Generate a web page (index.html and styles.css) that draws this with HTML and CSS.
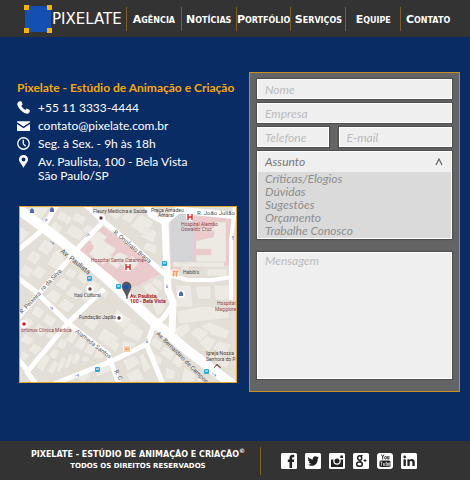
FILE: index.html
```html
<!DOCTYPE html>
<html lang="pt-BR">
<head>
<meta charset="utf-8">
<meta name="viewport" content="width=device-width, initial-scale=1">
<title>Pixelate - Contato</title>
<link rel="stylesheet" href="styles.css">
</head>
<body>
<header class="topbar">
  <a class="brand" href="#">
    <svg class="brand-mark" viewBox="0 0 28 28" aria-hidden="true">
      <rect x="1" y="1" width="26" height="26" fill="#1450b4"/>
      <path d="M0 0h5v5H0zM23 0h5v5h-5zM0 23h5v5H0zM23 23h5v5h-5z" fill="#f8b400"/>
    </svg>
    <span>PIXELATE</span>
  </a>
  <nav class="menu">
    <a href="#">Agência</a>
    <a href="#">Notícias</a>
    <a href="#">Portfólio</a>
    <a href="#">Serviços</a>
    <a href="#">Equipe</a>
    <a href="#">Contato</a>
  </nav>
</header>

<main class="content">
  <section class="info">
    <h1>Pixelate - Estúdio de Animação e Criação</h1>
    <ul class="contacts">
      <li>
        <svg viewBox="0 0 12 12" aria-hidden="true"><path d="M2.4.3 4 .2 5.2 3.2 3.9 4.4Q5.2 7 7.6 8.2L8.9 6.9 11.8 8.4Q12.2 10.6 10 11.7 7.6 12.2 4 8.9.2 5.2.2 2.6.6.8 2.4.3z" fill="#fff"/></svg>
        <span>+55 11 3333-4444</span>
      </li>
      <li>
        <svg viewBox="0 0 12 12" aria-hidden="true"><path d="M0 2h12v1L6 7 0 3zM0 4.5l6 4 6-4V11H0z" fill="#fff"/></svg>
        <span>contato@pixelate.com.br</span>
      </li>
      <li>
        <svg viewBox="0 0 12 12" aria-hidden="true"><circle cx="6" cy="6" r="5.3" fill="none" stroke="#fff" stroke-width="1.2"/><path d="M5.8 2.5v3.8L8 8.6" fill="none" stroke="#fff" stroke-width="1.2"/></svg>
        <span>Seg. à Sex. - 9h às 18h</span>
      </li>
      <li>
        <svg viewBox="0 0 12 12" aria-hidden="true"><path fill-rule="evenodd" d="M6 0a4.2 4.2 0 0 1 4.2 4.2C10.200 6.500 7.500 8.500 6 12 4.500 8.500 1.800 6.500 1.800 4.200A4.200 4.200 0 0 1 6 0zM6 2.400a1.800 1.800 0 1 0 0 3.600 1.800 1.800 0 0 0 0-3.600z" fill="#fff"/></svg>
        <span>Av. Paulista, 100 - Bela Vista<br>São Paulo/SP</span>
      </li>
    </ul>

    <svg class="map" viewBox="20 207 216 175" role="img" aria-label="Mapa: Av. Paulista, 100 - Bela Vista">
      <rect x="20" y="207" width="216" height="175" fill="#e3dfd7"/>
      <g fill="#eacaca">
        <path d="M78 252 102 226 131 247 160 274 137 286 124 289z"/>
        <path d="M170 219 180 211 232 215 232 265 171 270z"/>
      </g>
      <path d="M170 222 179 212 195 214 193 262 171 262z" fill="#d5d5d8"/>
      <g fill="#edeae4" stroke="#dad6cd" stroke-width=".4">
        <path d="M20 226l10 7-10 10zM32 207h18l-12 16-12-9zM61 211l12 7-5 7-12-7zM76 212l11 6-5 7-11-6zM54 221l9 6-5 8-9-6zM72 224l14 8-7 9-14-8zM88 224l8 5-6 8-9-6z"/>
        <path d="M45 239l10 6-8 11-10-7zM33 250l9 6-7 9-9-6zM54 252l7-4 4 14-9 8-9-6zM24 264l10 6-6 8-8-5zM38 265l9 6-7 9-9-6z"/>
        <path d="M70 267l8 5-5 7-9-5zM81 271l9 7-5 7-9-7zM92 279l9 7-6 9-10-7zM62 277l9 5-7 9-9-6zM73 285l10 6-7 9-11-6zM53 289l9 6-7 9-10-7zM65 298l10 7-7 8-11-7zM86 293l8 5-5 6-8-5zM102 286l8 7-5 5-7-6z"/>
        <path d="M36 305l9 6-5 8-9-5zM47 313l10 6-5 8-10-5zM26 316l8 6-5 7-8-5zM38 323l10 6-6 8-9-5zM25 333l9 6-5 7-9-5zM34 343l8 5-6 7-8-5zM50 331l6 4-4 5-7-4zM22 350l8 5-5 6-5-3z"/>
        <path d="M73 329l6 4-7 11-7-4zM82 334l7 5-7 12-8-5zM91 341l7 5-6 10-9-4zM61 338l7 4-5 8-7-4zM54 348l6 3-5 9-7-4zM45 354l6 3-8 15-7-5zM54 360l5 3-6 12-6-4zM62 356l5 3-7 14-4-2zM69 353l5 3-6 13-4-2zM76 352l5 4-5 9-5-2zM84 355l6 3-3 4-6-1zM98 348l8 6-4 5-9-1z"/>
        <path d="M104 328l15 10-9 10-13-9zM90 315l10 7-7 9-10-7zM117 309l15 11-7 10-14-11zM128 321l16 10-5 11-17-8zM112 339l8 5-4 8-8-6zM124 340l13 4-9 5-8-2z"/>
        <path d="M141 214l13 8-9 14-15-10zM126 213l11 1-7 10-9-6zM145 227l12 5-3 11-14-6zM146 242l11 3-1 10-13-6zM113 210l9 4-5 6-9-6zM142 287l8-5 10 11-8 5zM155 278l8 4-1 9-11-8zM140 292l9 7-6 8-9-5zM151 301l10-5 5 12-9 9z"/>
        <path d="M89 239l10-8 8 6-3 4 12 8-5 7 10 8-4 5-10-8-4 4-14-11 5-6zM119 252l9 4-5 10-11-8zM132 256l7 6-6 8-9-6z"/>
        <path d="M197 229l17-1v-6h12v40h-30v-7h15v-6h-15v-8l18-4v-6h-17zM173 262h51v5h-51zM181 263h8v6h-8z"/>
        <path d="M176 285h15l2 22h-17zM195 286h16v13h-13zM214 285h16l-1 15h-14zM176 311l27-5 26 2v10l-50 6zM207 269h20v7h-20z"/>
        <path d="M164 322l10 5-8 11-10-8zM178 326l10-3 3 7-10 8-9-6zM190 333l7-6 13 5-10 10zM200 326l9-4 21 8-4 9-14-4zM199 343l8-8 9 6-7 11zM218 341l13 3-4 10-15-5zM208 354l10-1 12 10-4 5-16-8z"/>
        <path d="M154 337l9 6-4 8-9-7zM165 346l10 7-4 8-12-8zM152 352l10 6-1 8-6-3zM177 354l8 6-5 8-9-6zM166 367l10 4-2 8h-9zM184 367l12 8-2 7h-13zM122 361l12-6 7 8-13 8zM143 353l8 15-7 5-5-17zM126 374l12-6 7 11-15 3zM95 369l14-6 4 7-16 7zM75 377l13-7 3 6-8 6zM199 375l9 7h-11z"/>
      </g>
      <g fill="none" stroke="#fff" stroke-linejoin="round">
        <path d="M57 205 40 232 18 250M102 223 80 246 64 265 42 290 18 318" stroke-width="5"/>
        <path d="M84 204 103 221 131 244 169 278" stroke-width="5"/>
        <path d="M147 205 151 214 165 222 166 250 168 290 173 302 172 332M164 222 178 210 238 216" stroke-width="7"/>
        <path d="M235 207 231 240 231 300M168 275 188 280 212 280 232 277" stroke-width="4"/>
        <path d="M18 278 35 291 68 323 108 354 119 384M104 289 68 323 27 372 36 384M18 359 28 371" stroke-width="5"/>
        <path d="M54 384 112 361 147 344 153 327 164 317 173 304M146 343 163 384" stroke-width="5"/>
        <path d="M17 208 60 240 105 277 128 298 155 323 187 350 233 385" stroke-width="10"/>
      </g>
      <g fill="none" stroke="#8793c8" stroke-width=".7">
        <path d="m50 241 4 3-1-2m1 2h-2M45 222l2-3-2 1m2-1v2M86 237l3-3-2 0m2 0v2M50 307l3 2-1-2m1 2h-2M75 376l4-1-2-1m2 1-1 2M167 284v4l-1-2m1 2 1-2M233 240v-4l-1 2m1-2 1 2M147 339v4l-1-2m1 2 1-2M212 373l4 3-1-2m1 2h-2"/>
      </g>
      <g fill="#fff"><circle cx="101" cy="218" r="4"/><circle cx="128" cy="267" r="4"/><circle cx="190" cy="217" r="4"/><circle cx="90" cy="289" r="4"/><circle cx="119" cy="318" r="4"/><circle cx="24" cy="324" r="4"/><circle cx="175" cy="273" r="4"/><circle cx="127" cy="349" r="4"/><circle cx="181" cy="294" r="4"/></g>
      <g class="map-street">
        <text transform="translate(60 252) rotate(39)" class="map-avenue">Av. Paulista</text>
        <text transform="translate(113 233) rotate(40)">R. Onofrato Braga</text>
        <text transform="translate(43 291) rotate(-46)">ra da Silva</text>
        <text transform="translate(22 314) rotate(-46)">R. Peixeira</text>
        <text transform="translate(75 332) rotate(38)">Alameda Santos</text>
        <text transform="translate(156 334) rotate(45)">Av. Bernardino de Campos</text>
        <text x="197" y="215">R. João Julião</text>
        <text transform="translate(114 371) rotate(62)">R. C</text>
      </g>
      <g class="map-place">
        <text x="93" y="213">Fleury Medicina e Saúde</text>
        <text x="151" y="212">Praça Amadeu</text>
        <text x="158" y="217">Amaral</text>
        <text x="183" y="274">Habib's</text>
        <text x="74" y="297">Itaú Cultural</text>
        <text x="79" y="319">Fundação Japão</text>
        <text x="206" y="355">Igreja Nossa</text>
        <text x="206" y="361">Senhora do P</text>
      </g>
      <g class="map-place map-health">
        <text x="91" y="262">Hospital Santa Catarina</text>
        <text x="181" y="226">Hospital Alemão</text>
        <text x="181" y="231">Oswaldo Cruz</text>
        <text x="21" y="332">orhinus Clínica Médica</text>
        <text x="217" y="305">Hospital</text>
        <text x="215" y="311">Maggiore</text>
      </g>
      <g fill="#673a3a"><circle cx="101" cy="218" r="1.700"/><circle cx="90" cy="289" r="1.700"/><circle cx="119" cy="318" r="1.700"/></g>
      <circle cx="24" cy="324" r="1.800" fill="#d92020"/>
      <path d="M126 264v6m4-6v6m-4-3h4M188 214v6m4-6v6m-4-3h4" fill="none" stroke="#e1242c" stroke-width="1.400"/>
      <path d="M173 271h5v1h-5zm0 2h1v3h-1zm3 0h1v3h-1zM125 346v3h4v-3m-2 0v6m-2-3v3m4-3v3" fill="none" stroke="#f07b20" stroke-width=".8"/>
      <g fill="#5268b8"><path d="M30 213v-3l2-2 2 2v3zM50 212v-3l2-2 2 2v3zM179 296v-3l2-2 2 2v3z"/></g>
      <g fill="#26a9e1"><rect x="87" y="276" width="5" height="5" rx="1"/><rect x="116" y="284" width="5" height="5" rx="1"/><rect x="162" y="261" width="5" height="5" rx="1"/><rect x="95" y="367" width="5" height="5" rx="1"/><rect x="204" y="369" width="5" height="5" rx="1"/></g>
      <path d="M88 278h3M117 286h3M163 263h3M96 369h3M205 371h3" stroke="#fff"/>
      <path d="M214 368l3-4 4 4-2-1-2-2-2 2z" fill="#76473c" stroke="#76473c" stroke-width=".6"/>
      <path d="M127 299C126 292 122 290 122 286.500a4.500 4.500 0 0 1 9 0C131 290 128 292 127 299z" fill="#55585c" stroke="#333" stroke-width=".5"/>
      <circle cx="126.500" cy="287" r="2.300" fill="#1450c8"/>
      <g class="map-pin-label"><text x="130" y="298">Av. Paulista,</text><text x="130" y="303">100 - Bela Vista</text></g>
    </svg>
  </section>

  <form class="form">
    <input type="text" placeholder="Nome" aria-label="Nome">
    <input type="text" placeholder="Empresa" aria-label="Empresa">
    <div class="form-row">
      <input type="tel" placeholder="Telefone" aria-label="Telefone">
      <input type="email" placeholder="E-mail" aria-label="E-mail">
    </div>
    <div class="subject">
      <button type="button" class="subject-head" id="assunto" aria-expanded="true" aria-controls="assuntos">
        <span>Assunto</span>
        <svg viewBox="0 0 8 8" aria-hidden="true"><path d="M1 7 4 1l3 6" fill="none" stroke="#666" stroke-width="1.200"/></svg>
      </button>
      <select class="subject-list" id="assuntos" size="5" aria-labelledby="assunto">
        <option>Críticas/Elogios</option>
        <option>Dúvidas</option>
        <option>Sugestões</option>
        <option>Orçamento</option>
        <option>Trabalhe Conosco</option>
      </select>
    </div>
    <textarea placeholder="Mensagem" aria-label="Mensagem"></textarea>
  </form>
</main>

<footer class="footer">
  <div class="legal">
    <p class="legal-name">PIXELATE - ESTÚDIO DE ANIMAÇÃO E CRIAÇÃO<sup>©</sup></p>
    <p class="legal-rights">TODOS OS DIREITOS RESERVADOS</p>
  </div>
  <div class="social">
    <a href="#" aria-label="Facebook"><svg viewBox="0 0 16 16"><rect width="16" height="16" rx="1.500" fill="#fff"/><path d="M8.500 15V9H6.800V6.500h1.700V5c0-2.200 1.300-3.200 3-3.200h1.700v2.400H12c-.7 0-.9.300-.9 1v1.300h2.100L12.900 9h-1.800v6z" fill="#222"/></svg></a>
    <a href="#" aria-label="Twitter"><svg viewBox="0 0 16 16"><rect width="16" height="16" rx="1.500" fill="#fff"/><path d="M3 4c1.300 1.500 2.900 2.300 4.900 2.400C7.500 4.600 8.700 3.300 10.200 3.300c.8 0 1.400.3 1.900.8l1.500-.6-1 1.400 1.300-.3-1.200 1.300c.2 4-2.700 6.900-6.200 6.900-1.500 0-2.700-.4-3.800-1.100 1.300.1 2.400-.2 3.400-.9-1.200-.1-1.900-.8-2.200-1.700h1C3.800 8.700 3 7.900 3 6.600l1 .3C2.900 6 2.500 5.200 3 4z" fill="#222"/></svg></a>
    <a href="#" aria-label="Instagram"><svg viewBox="0 0 16 16"><rect width="16" height="16" rx="1.500" fill="#fff"/><path d="M2 6.500h2.600a4 4 0 0 0-.3 1.500 3.700 3.700 0 0 0 7.400 0 4 4 0 0 0-.3-1.500H14V14H2zM11.300 2.500H14V5h-2.700z" fill="#222"/><circle cx="8" cy="8" r="2.500" fill="#222"/></svg></a>
    <a href="#" aria-label="Google+"><svg viewBox="0 0 16 16"><rect width="16" height="16" rx="1.500" fill="#fff"/><g fill="none" stroke="#222"><ellipse cx="6.700" cy="5" rx="2" ry="2.300" stroke-width="1.500"/><path d="M7.500 2.500h2.200M7 7.300c-.8 1 .8 1.200 1.500 2" stroke-width="1.200"/><ellipse cx="6.500" cy="11.200" rx="2.800" ry="2.100" stroke-width="1.500"/><path d="M10.500 7.500h3M12 6v3" stroke-width="1"/></g></svg></a>
    <a href="#" aria-label="YouTube"><svg viewBox="0 0 16 16"><rect width="16" height="16" rx="3" fill="#fff"/><rect x="2.500" y="7.500" width="11" height="6.500" rx="1.500" fill="#222"/><g fill="none" stroke="#222" stroke-width=".9"><path d="m4.500 1.500 1.200 2.500L6.900 1.500M5.700 4v2.500M10.300 3v2.700q.2.800 1.600.3V3"/><ellipse cx="8.500" cy="4.700" rx=".9" ry="1.400"/></g><path d="M3.500 9h2M4.500 9v4M6.500 10v2.500h1.300V10M9.200 8.700v4h1.300V10H9.200M13 11.300h-1.400V10H13zm-1.400 0v1.400H13" fill="none" stroke="#fff" stroke-width=".6"/></svg></a>
    <a href="#" aria-label="LinkedIn"><svg viewBox="0 0 16 16"><rect width="16" height="16" rx="1.500" fill="#fff"/><path d="M2.500 6.200h2.300V13H2.500zM6.400 6.200h2.200v1c.9-1.700 5.100-1.900 5.100 1.800v4h-2.300V9.500c0-2-2.700-2-2.700 0V13H6.400z" fill="#222"/><circle cx="3.700" cy="3.900" r="1.300" fill="#222"/></svg></a>
  </div>
</footer>
</body>
</html>
```
FILE: styles.css
```css
* {
  box-sizing: border-box;
}

body {
  margin: 0;
  min-height: 100vh;
  display: flex;
  flex-direction: column;
  background: #092c65;
  color: #fff;
  font-family: Lato, "Open Sans", sans-serif;
}

a {
  color: inherit;
  text-decoration: none;
}

.topbar {
  display: flex;
  align-items: center;
  height: 37px;
  padding-right: 15px;
  padding-left: 24px;
  background: #333;
  font-family: "DejaVu Sans", sans-serif;
}

.brand {
  flex: 0 0 102px;
  display: flex;
  align-items: center;
  font-size: 15px;
}

.brand-mark {
  width: 28px;
  height: 28px;
}

.menu {
  flex: 1;
  display: grid;
  grid-template-columns: repeat(6, 1fr);
}

.menu a {
  padding-top: 2px;
  border-left: 1px solid #805d22;
  font-size: 11px;
  font-weight: bold;
  font-variant: small-caps;
  line-height: 22px;
  text-align: center;
  white-space: nowrap;
}

.content {
  flex: 1;
  display: grid;
  grid-template-columns: 220fr 211fr;
  align-items: start;
  gap: 12px;
  padding: 35px 10px 49px 17px;
}

.info {
  padding-top: 8px;
}

h1 {
  margin: 0;
  color: #f5a80c;
  font-size: 12px;
  line-height: 16px;
  white-space: nowrap;
}

.contacts {
  display: grid;
  gap: 4px;
  margin: 5px 0 23px;
  padding: 0;
  list-style: none;
  font-size: 12px;
  line-height: 14px;
}

.contacts li {
  display: flex;
  gap: 8px;
}

.contacts svg {
  flex: none;
  width: 13px;
  height: 13px;
}

.map {
  display: block;
  width: calc(100% - 2px);
  margin-left: 2px;
  border: 1px solid #e5a52b;
}

.map text {
  font-family: Roboto, sans-serif;
}

.map-street text {
  fill: #555;
  font-size: 6px;
}

.map-street .map-avenue {
  font-size: 7px;
}

.map-place text {
  fill: #4e4542;
  font-size: 5px;
}

.map-health text {
  fill: #94454c;
}

.map-pin-label text {
  fill: #a51722;
  font-size: 5px;
  font-weight: bold;
}

.form {
  display: flex;
  flex-direction: column;
  gap: 4px;
  padding: 6px 7px 12px;
  border: 1px solid #c98e1e;
  background: #646464;
}

input,
textarea,
.subject {
  width: 100%;
  margin: 0;
  border: 1px solid #fff;
  border-radius: 0;
  background: #efefef;
  box-shadow: 0 0 1px 1px #505050;
}

input,
textarea,
button,
select {
  color: #777;
  font: italic 12px/14px Lato, "Open Sans", sans-serif;
}

input {
  min-width: 0;
  height: 20px;
  padding: 0 7px;
}

::placeholder {
  color: #bbb;
  opacity: 1;
}

.form-row {
  display: grid;
  grid-template-columns: 72fr 114fr;
  gap: 10px;
}

.subject-head {
  display: flex;
  align-items: center;
  justify-content: space-between;
  width: 100%;
  height: 20px;
  padding: 0 8px 0 7px;
  border: 0;
  background: #efefef;
}

.subject-head svg {
  width: 8px;
  height: 8px;
}

.subject-list {
  display: block;
  width: 100%;
  height: 66px;
  padding: 0;
  border: 0;
  border-radius: 0;
  background: #dadada;
  overflow: hidden;
}

.subject-list option {
  display: flex;
  align-items: center;
  height: 13px;
  min-height: 0;
  padding: 0 7px;
  line-height: 13px;
  color: #8e8e8e;
}

textarea {
  height: 127px;
  margin-top: 9px;
  padding: 1px 7px;
  resize: none;
}

.footer {
  display: flex;
  align-items: center;
  height: 39px;
  background: #333;
}

.legal {
  flex: 0 0 261px;
  padding: 3px 0 3px 16px;
  border-right: 1px solid #805d22;
  font-family: "DejaVu Sans", sans-serif;
  font-weight: bold;
  text-align: center;
  white-space: nowrap;
}

.legal p {
  margin: 0;
}

.legal-name {
  font-size: 8px;
  line-height: 10px;
}

.legal-name sup {
  font-size: 6px;
  line-height: 0;
}

.legal-rights {
  font-size: 7px;
  line-height: 12px;
}

.social {
  display: flex;
  gap: 8px;
  padding-left: 20px;
}

.social svg {
  display: block;
  width: 16px;
  height: 16px;
}
```
